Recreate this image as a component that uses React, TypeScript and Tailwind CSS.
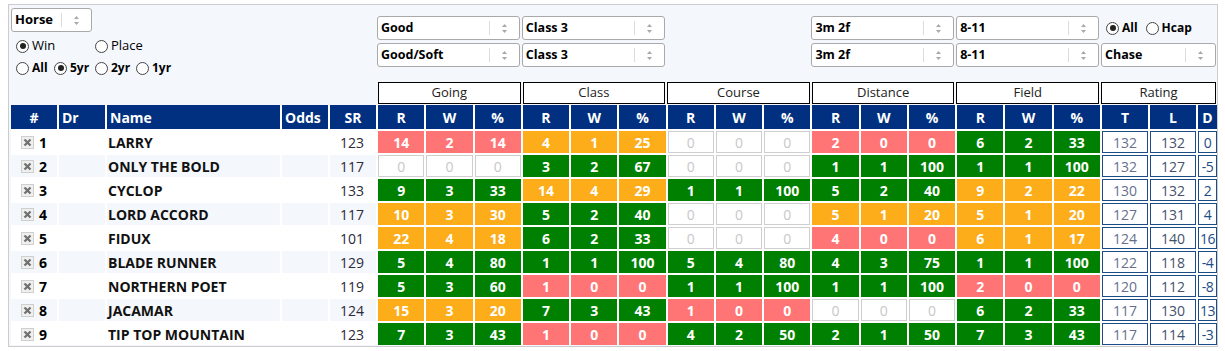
import React from "react";

type Tone = "r" | "o" | "g" | "e";
type Stat = [Tone, number, number, number];

interface Runner {
  no: number;
  name: string;
  sr: number;
  stats: Stat[];
  t: number;
  l: number;
  d: number;
}

const runners: Runner[] = [
  { no: 1, name: "LARRY", sr: 123, stats: [["r", 14, 2, 14], ["o", 4, 1, 25], ["e", 0, 0, 0], ["r", 2, 0, 0], ["g", 6, 2, 33]], t: 132, l: 132, d: 0 },
  { no: 2, name: "ONLY THE BOLD", sr: 117, stats: [["e", 0, 0, 0], ["g", 3, 2, 67], ["e", 0, 0, 0], ["g", 1, 1, 100], ["g", 1, 1, 100]], t: 132, l: 127, d: -5 },
  { no: 3, name: "CYCLOP", sr: 133, stats: [["g", 9, 3, 33], ["o", 14, 4, 29], ["g", 1, 1, 100], ["g", 5, 2, 40], ["o", 9, 2, 22]], t: 130, l: 132, d: 2 },
  { no: 4, name: "LORD ACCORD", sr: 117, stats: [["o", 10, 3, 30], ["g", 5, 2, 40], ["e", 0, 0, 0], ["o", 5, 1, 20], ["o", 5, 1, 20]], t: 127, l: 131, d: 4 },
  { no: 5, name: "FIDUX", sr: 101, stats: [["o", 22, 4, 18], ["g", 6, 2, 33], ["e", 0, 0, 0], ["r", 4, 0, 0], ["o", 6, 1, 17]], t: 124, l: 140, d: 16 },
  { no: 6, name: "BLADE RUNNER", sr: 129, stats: [["g", 5, 4, 80], ["g", 1, 1, 100], ["g", 5, 4, 80], ["g", 4, 3, 75], ["g", 1, 1, 100]], t: 122, l: 118, d: -4 },
  { no: 7, name: "NORTHERN POET", sr: 119, stats: [["g", 5, 3, 60], ["r", 1, 0, 0], ["g", 1, 1, 100], ["g", 1, 1, 100], ["r", 2, 0, 0]], t: 120, l: 112, d: -8 },
  { no: 8, name: "JACAMAR", sr: 124, stats: [["o", 15, 3, 20], ["g", 7, 3, 43], ["r", 1, 0, 0], ["e", 0, 0, 0], ["g", 6, 2, 33]], t: 117, l: 130, d: 13 },
  { no: 9, name: "TIP TOP MOUNTAIN", sr: 123, stats: [["g", 7, 3, 43], ["r", 1, 0, 0], ["g", 4, 2, 50], ["g", 2, 1, 50], ["g", 7, 3, 43]], t: 117, l: 114, d: -3 },
];

const toneClass: Record<Tone, string> = {
  r: "bg-[#ff7575] text-white font-bold",
  o: "bg-[#fdac1a] text-white font-bold",
  g: "bg-[#008000] text-white font-bold",
  e: "bg-white border border-[#cfcfcf] text-[#c8c8c8]",
};

function Arrows() {
  return (
    <svg width="7" height="11" viewBox="0 0 7 11">
      <path d="M3.5 1 L6 4 L1 4 Z" fill="#a8a8a8" />
      <path d="M3.5 10 L6 7 L1 7 Z" fill="#a8a8a8" />
    </svg>
  );
}

function Select({ value, big }: { value: string; big?: boolean }) {
  return (
    <div className="flex items-center h-[24px] bg-white border border-[#a9a9a9] rounded-[3px]">
      <span className={`flex-1 pl-[3px] font-bold text-black ${big ? "text-[13px]" : "text-[12.5px]"}`}>{value}</span>
      <span className="w-px h-[14px] bg-[#dcdcdc]" />
      <span className="w-[29px] flex items-center justify-center">
        <Arrows />
      </span>
    </div>
  );
}

function Radio({ checked, label, bold }: { checked?: boolean; label: string; bold?: boolean }) {
  return (
    <span className="flex items-center gap-[3px]">
      <span className="w-[13px] h-[13px] rounded-full border border-[#444] bg-white flex items-center justify-center">
        {checked && <span className="w-[6px] h-[6px] rounded-full bg-[#222]" />}
      </span>
      <span className={`text-black ${bold ? "font-bold text-[12px]" : "text-[13px]"}`}>{label}</span>
    </span>
  );
}

function XBox() {
  return (
    <span className="w-[13px] h-[13px] border border-[#cfcfcf] bg-[#efefef] flex items-center justify-center">
      <svg width="9" height="9" viewBox="0 0 9 9">
        <path d="M1.5 1.5 L7.5 7.5 M7.5 1.5 L1.5 7.5" stroke="#6e6e6e" strokeWidth="2.2" />
      </svg>
    </span>
  );
}

const groups = ["Going", "Class", "Course", "Distance", "Field"];

export default function App() {
  return (
    <div className="pt-[4px] pl-[8px] font-['Open_Sans',sans-serif]">
      <div className="w-[1210px] h-[343px] border border-[#cccccc] bg-[#f4f7fc] pl-[1px]">
        {/* filters */}
        <div className="grid grid-cols-[46px_46px_173px_46px_46px_repeat(15,minmax(0,1fr))_46px_46px_19px] gap-x-[2px] h-[77px] w-[1206px]">
          <div className="col-span-5 pt-[3px] pl-[1px]">
            <div className="w-[81px]">
              <Select value="Horse" big />
            </div>
            <div className="flex items-center h-[20px] mt-[4px] pl-[5px]">
              <span className="w-[79px]">
                <Radio checked label="Win" />
              </span>
              <Radio label="Place" />
            </div>
            <div className="flex items-center h-[20px] mt-[2px] pl-[5px]">
              <span className="w-[38px]">
                <Radio label="All" bold />
              </span>
              <span className="w-[41px]">
                <Radio checked label="5yr" bold />
              </span>
              <span className="w-[41px]">
                <Radio label="2yr" bold />
              </span>
              <Radio label="1yr" bold />
            </div>
          </div>
          <div className="col-span-3 pt-[11px] flex flex-col gap-[3px]">
            <Select value="Good" />
            <Select value="Good/Soft" />
          </div>
          <div className="col-span-3 pt-[11px] flex flex-col gap-[3px]">
            <Select value="Class 3" />
            <Select value="Class 3" />
          </div>
          <div className="col-span-3" />
          <div className="col-span-3 pt-[11px] flex flex-col gap-[3px]">
            <Select value="3m 2f" />
            <Select value="3m 2f" />
          </div>
          <div className="col-span-3 pt-[11px] flex flex-col gap-[3px]">
            <Select value="8-11" />
            <Select value="8-11" />
          </div>
          <div className="col-span-3 pt-[11px] flex flex-col gap-[3px]">
            <div className="h-[24px] flex items-center gap-[8px] pl-[5px]">
              <Radio checked label="All" bold />
              <Radio label="Hcap" bold />
            </div>
            <Select value="Chase" />
          </div>
        </div>

        {/* group labels */}
        <div className="grid grid-cols-[46px_46px_173px_46px_46px_repeat(15,minmax(0,1fr))_46px_46px_19px] gap-x-[2px] h-[22px] w-[1206px] pl-[1px]">
          <div className="col-span-5" />
          {groups.map((g) => (
            <div key={g} className="col-span-3 bg-white border border-black flex items-center justify-center text-[13px] text-[#222]">
              {g}
            </div>
          ))}
          <div className="col-span-3 bg-white border border-black flex items-center justify-center text-[13px] text-[#222]">
            Rating
          </div>
        </div>

        {/* table */}
        <div className="mt-[1px] ml-[1px] grid grid-cols-[46px_46px_173px_46px_46px_repeat(15,minmax(0,1fr))_46px_46px_19px] grid-rows-[24px_repeat(9,22px)] gap-[2px] bg-white w-[1206px] text-[14px]">
          <div className="bg-[#00307f] text-white font-bold flex items-center justify-center">#</div>
          <div className="bg-[#00307f] text-white font-bold flex items-center pl-[3px]">Dr</div>
          <div className="bg-[#00307f] text-white font-bold flex items-center pl-[3px]">Name</div>
          <div className="bg-[#00307f] text-white font-bold flex items-center pl-[3px]">Odds</div>
          <div className="bg-[#00307f] text-white font-bold flex items-center justify-center">SR</div>
          {groups.map((g) =>
            ["R", "W", "%"].map((h) => (
              <div key={g + h} className="bg-[#00307f] text-white font-bold flex items-center justify-center">
                {h}
              </div>
            ))
          )}
          <div className="bg-[#00307f] text-white font-bold flex items-center justify-center">T</div>
          <div className="bg-[#00307f] text-white font-bold flex items-center justify-center">L</div>
          <div className="bg-[#00307f] text-white font-bold flex items-center justify-center">D</div>

          {runners.map((r) => {
            const rowBg = r.no % 2 === 0 ? "bg-[#f4f7fc]" : "bg-white";
            return (
              <React.Fragment key={r.no}>
                <div className={`${rowBg} flex items-center pl-[10px] gap-[5px]`}>
                  <XBox />
                  <span className="font-bold text-black">{r.no}</span>
                </div>
                <div className={rowBg} />
                <div className={`${rowBg} flex items-center pl-[1px] font-bold text-[#111] whitespace-nowrap`}>{r.name}</div>
                <div className={rowBg} />
                <div className={`${rowBg} flex items-center justify-end pr-[12px] text-[#2a2a3a]`}>{r.sr}</div>
                {r.stats.map((s, i) =>
                  [s[1], s[2], s[3]].map((v, j) => (
                    <div key={`${i}-${j}`} className={`${toneClass[s[0]]} flex items-center justify-center`}>
                      {v}
                    </div>
                  ))
                )}
                <div className="bg-white border-[1.5px] border-[#1d4c86] flex items-center justify-center text-[#66708e]">{r.t}</div>
                <div className="bg-white border-[1.5px] border-[#1d4c86] flex items-center justify-center text-[#43516c]">{r.l}</div>
                <div className="bg-white border-[1.5px] border-[#1d4c86] flex items-center justify-center text-[#1d4c86] whitespace-nowrap tracking-[-0.5px]">{r.d}</div>
              </React.Fragment>
            );
          })}
        </div>
      </div>
    </div>
  );
}
